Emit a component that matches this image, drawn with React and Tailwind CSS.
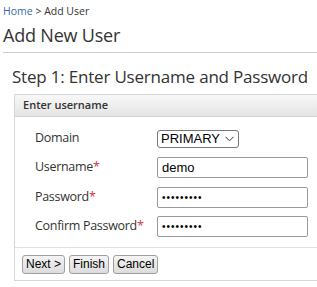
export default function App() {
  return (
    <div className="w-[317px] h-[287px] overflow-hidden bg-white text-[#333] font-['Open_Sans',sans-serif] whitespace-nowrap">
      <div className="px-[3px] pt-[4px]">
        <div className="text-[10.5px] leading-[15px]">
          <span className="text-[#3a6aa6]">Home</span>
          <span> &gt; Add User</span>
        </div>
        <h1 className="mt-[3px] text-[18px] tracking-[-0.2px] leading-[26px] pb-[4px] border-b border-[#c3cbdc] w-[340px]">Add New User</h1>
      </div>
      <div className="pl-[14px] pt-[12px]">
        <h2 className="text-[17px] tracking-[-0.2px] leading-[24px] -ml-[2px]">Step 1: Enter Username and Password</h2>
        <div className="mt-[5px] w-[340px] border border-[#d6d6d6]">
          <div className="h-[22px] flex items-center pl-[8px] text-[11px] font-semibold text-[#333] bg-gradient-to-b from-[#f8f8f8] to-[#e4e4e4] border-b border-[#d0d0d0]">
            Enter username
          </div>
          <div className="pt-[7px] pb-[5px] text-[12.5px] tracking-[-0.3px]">
            <div className="flex items-center h-[29px]">
              <div className="w-[142px] pl-[20px]">Domain</div>
              <div className="h-[18px] pl-[3px] pr-[4px] border border-[#777] rounded-[3px] flex items-center gap-[5px] font-['Liberation_Sans',sans-serif] text-[13px] tracking-normal text-black">
                PRIMARY
                <svg width="9" height="6" viewBox="0 0 9 6" fill="none" stroke="#333" strokeWidth="1">
                  <path d="M0.5 0.8 L4.5 4.8 L8.5 0.8" />
                </svg>
              </div>
            </div>
            <Row label="Username" value="demo" />
            <Row label="Password" value="•••••••••" dots />
            <Row label="Confirm Password" value="•••••••••" dots />
          </div>
          <div className="border-t border-[#e0e0e0] px-[7px] pt-[7px] pb-[6px] flex gap-[4px] font-['Liberation_Sans',sans-serif] text-[12px] text-black">
            <Btn>Next &gt;</Btn>
            <Btn>Finish</Btn>
            <Btn>Cancel</Btn>
          </div>
        </div>
      </div>
    </div>
  );
}

function Row({ label, value, dots }) {
  return (
    <div className="flex items-center h-[29.5px]">
      <div className="w-[142px] pl-[20px]">
        {label}
        <span className="text-[#e0303a]">*</span>
      </div>
      <div
        className={
          "w-[151px] h-[21px] px-[4px] border border-[#999] rounded-[2px] flex items-center font-['Liberation_Sans',sans-serif] text-black " +
          (dots ? "text-[10px] tracking-[1px]" : "text-[13px] tracking-normal")
        }
      >
        {value}
      </div>
    </div>
  );
}

function Btn({ children }) {
  return (
    <div className="h-[19px] px-[3px] flex items-center border border-[#a0a0a0] rounded-[3px] bg-gradient-to-b from-[#f4f4f4] to-[#dcdcdc]">
      {children}
    </div>
  );
}
